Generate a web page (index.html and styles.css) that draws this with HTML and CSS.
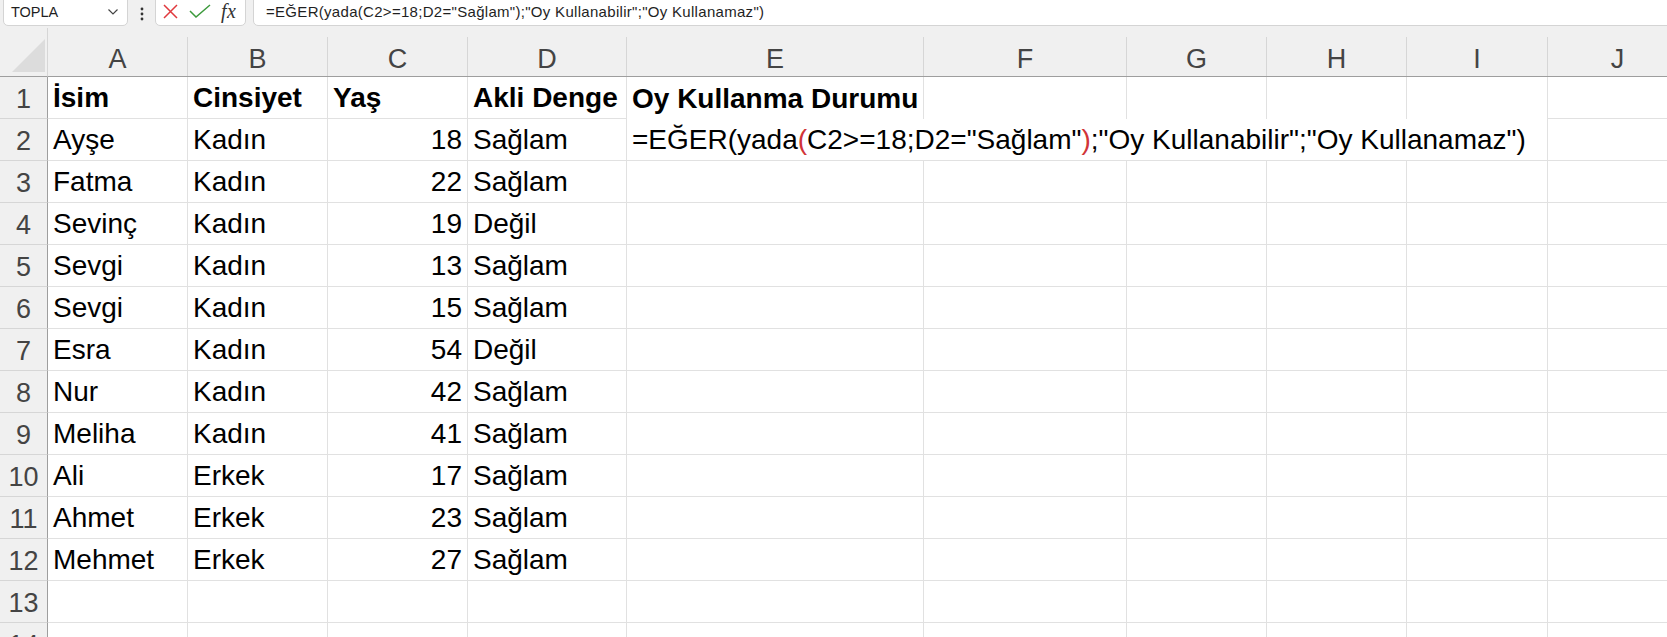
FILE: index.html
```html
<!DOCTYPE html>
<html lang="tr">
<head>
<meta charset="utf-8">
<title>Excel</title>
<link rel="stylesheet" href="styles.css">
</head>
<body>
<div class="app">
  <div class="toolbar">
    <div class="namebox">
      <span class="nb-text">TOPLA</span>
      <svg class="chev" width="10" height="6" viewBox="0 0 10 6"><polyline points="0.5,0.5 5,5 9.5,0.5" fill="none" stroke="#444" stroke-width="1.2"/></svg>
    </div>
    <div class="more">
      <svg width="4" height="14" viewBox="0 0 4 14"><circle cx="2" cy="2" r="1.4" fill="#333"/><circle cx="2" cy="7" r="1.4" fill="#333"/><circle cx="2" cy="12" r="1.4" fill="#333"/></svg>
    </div>
    <div class="btns">
      <svg class="ico-x" width="15" height="15" viewBox="0 0 15 15"><path d="M1 1 L14 14 M14 1 L1 14" stroke="#e0393e" stroke-width="1.5" fill="none"/></svg>
      <svg class="ico-ok" width="22" height="14" viewBox="0 0 22 14"><path d="M1 7 L7 13 L21 1" stroke="#3c9a3c" stroke-width="1.5" fill="none"/></svg>
      <span class="fx">fx</span>
    </div>
    <div class="fbar">=EĞER(yada(C2&gt;=18;D2="Sağlam");"Oy Kullanabilir";"Oy Kullanamaz")</div>
  </div>

  <div class="sheet">
    <div class="corner"><svg width="34" height="34" viewBox="0 0 34 34"><polygon points="33,0 33,33 0,33" fill="#dcdcdc"/></svg></div>
    <div class="ch"><span>A</span></div>
    <div class="ch"><span>B</span></div>
    <div class="ch"><span>C</span></div>
    <div class="ch"><span>D</span></div>
    <div class="ch"><span>E</span></div>
    <div class="ch"><span>F</span></div>
    <div class="ch"><span>G</span></div>
    <div class="ch"><span>H</span></div>
    <div class="ch"><span>I</span></div>
    <div class="ch"><span>J</span></div>

    <div class="rh">1</div>
    <div class="c b">İsim</div><div class="c b">Cinsiyet</div><div class="c b">Yaş</div><div class="c b">Akli Denge</div><div class="c b open">Oy Kullanma Durumu</div><div class="c open"></div><div class="c open"></div><div class="c open"></div><div class="c open"></div><div class="c"></div>

    <div class="rh">2</div>
    <div class="c">Ayşe</div><div class="c">Kadın</div><div class="c n">18</div><div class="c">Sağlam</div>
    <div class="c edit">=EĞER(yada<span class="red">(</span>C2&gt;=18;D2="Sağlam"<span class="red">)</span>;"Oy Kullanabilir";"Oy Kullanamaz")</div>
    <div class="c"></div>

    <div class="rh">3</div>
    <div class="c">Fatma</div><div class="c">Kadın</div><div class="c n">22</div><div class="c">Sağlam</div><div class="c"></div><div class="c"></div><div class="c"></div><div class="c"></div><div class="c"></div><div class="c"></div>

    <div class="rh">4</div>
    <div class="c">Sevinç</div><div class="c">Kadın</div><div class="c n">19</div><div class="c">Değil</div><div class="c"></div><div class="c"></div><div class="c"></div><div class="c"></div><div class="c"></div><div class="c"></div>

    <div class="rh">5</div>
    <div class="c">Sevgi</div><div class="c">Kadın</div><div class="c n">13</div><div class="c">Sağlam</div><div class="c"></div><div class="c"></div><div class="c"></div><div class="c"></div><div class="c"></div><div class="c"></div>

    <div class="rh">6</div>
    <div class="c">Sevgi</div><div class="c">Kadın</div><div class="c n">15</div><div class="c">Sağlam</div><div class="c"></div><div class="c"></div><div class="c"></div><div class="c"></div><div class="c"></div><div class="c"></div>

    <div class="rh">7</div>
    <div class="c">Esra</div><div class="c">Kadın</div><div class="c n">54</div><div class="c">Değil</div><div class="c"></div><div class="c"></div><div class="c"></div><div class="c"></div><div class="c"></div><div class="c"></div>

    <div class="rh">8</div>
    <div class="c">Nur</div><div class="c">Kadın</div><div class="c n">42</div><div class="c">Sağlam</div><div class="c"></div><div class="c"></div><div class="c"></div><div class="c"></div><div class="c"></div><div class="c"></div>

    <div class="rh">9</div>
    <div class="c">Meliha</div><div class="c">Kadın</div><div class="c n">41</div><div class="c">Sağlam</div><div class="c"></div><div class="c"></div><div class="c"></div><div class="c"></div><div class="c"></div><div class="c"></div>

    <div class="rh">10</div>
    <div class="c">Ali</div><div class="c">Erkek</div><div class="c n">17</div><div class="c">Sağlam</div><div class="c"></div><div class="c"></div><div class="c"></div><div class="c"></div><div class="c"></div><div class="c"></div>

    <div class="rh">11</div>
    <div class="c">Ahmet</div><div class="c">Erkek</div><div class="c n">23</div><div class="c">Sağlam</div><div class="c"></div><div class="c"></div><div class="c"></div><div class="c"></div><div class="c"></div><div class="c"></div>

    <div class="rh">12</div>
    <div class="c">Mehmet</div><div class="c">Erkek</div><div class="c n">27</div><div class="c">Sağlam</div><div class="c"></div><div class="c"></div><div class="c"></div><div class="c"></div><div class="c"></div><div class="c"></div>

    <div class="rh">13</div>
    <div class="c"></div><div class="c"></div><div class="c"></div><div class="c"></div><div class="c"></div><div class="c"></div><div class="c"></div><div class="c"></div><div class="c"></div><div class="c"></div>

    <div class="rh">14</div>
    <div class="c"></div><div class="c"></div><div class="c"></div><div class="c"></div><div class="c"></div><div class="c"></div><div class="c"></div><div class="c"></div><div class="c"></div><div class="c"></div>
  </div>
</div>
</body>
</html>
```
FILE: styles.css
```css
* { box-sizing: border-box; }

html, body {
  margin: 0;
  padding: 0;
  background: #ffffff;
}

body {
  width: 1667px;
  height: 637px;
  overflow: hidden;
  font-family: "Liberation Sans", Arial, sans-serif;
  color: #000;
}

.app {
  width: 1667px;
  overflow: hidden;
}

/* ---------- formula toolbar ---------- */
.toolbar {
  height: 28px;
  background: #f0f0f0;
  display: flex;
  align-items: flex-end;
  padding: 0 0 2px 3px;
  overflow: hidden;
}

.namebox {
  flex: 0 0 125px;
  height: 34px;
  background: #fff;
  border: 1px solid #d4d4d4;
  border-radius: 5px;
  display: flex;
  align-items: flex-end;
  justify-content: space-between;
  padding: 0 9px 5px 7px;
}

.nb-text {
  font-size: 14.5px;
  line-height: 16px;
  color: #1f1f1f;
}

.chev {
  margin-bottom: 5px;
}

.more {
  flex: 0 0 27px;
  height: 26px;
  display: flex;
  align-items: center;
  justify-content: center;
  padding-top: 2px;
}

.btns {
  flex: 0 0 91px;
  height: 34px;
  background: #fff;
  border: 1px solid #d4d4d4;
  border-radius: 5px;
  display: flex;
  align-items: flex-end;
  padding: 0 0 4px 7px;
}

.ico-x {
  margin-bottom: 2px;
}

.ico-ok {
  margin-left: 11px;
  margin-bottom: 3px;
}

.fx {
  margin-left: 10px;
  font-family: "Liberation Serif", "Times New Roman", serif;
  font-style: italic;
  font-size: 20px;
  line-height: 20px;
  color: #333;
  letter-spacing: 0.5px;
}

.fbar {
  flex: 1 1 auto;
  margin-left: 7px;
  margin-right: -10px;
  height: 34px;
  background: #fff;
  border: 1px solid #d4d4d4;
  border-radius: 5px;
  display: flex;
  align-items: flex-end;
  padding: 0 0 5px 12px;
  font-size: 15px;
  line-height: 17px;
  letter-spacing: 0.3px;
  color: #1f1f1f;
  white-space: nowrap;
}

/* ---------- sheet grid ---------- */
.sheet {
  display: grid;
  grid-template-columns: 48px 140px 140px 140px 159px 297px 203px 140px 140px 141px 140px;
  grid-template-rows: 49px repeat(14, 42px);
  width: 1688px;
}

.corner {
  background: #f0f0f0;
  border-bottom: 1px solid #9e9e9e;
  border-right: 1px solid #d6d6d6;
  display: flex;
  align-items: flex-end;
  padding: 0 0 3px 12px;
}

.ch {
  background: #f0f0f0;
  border-bottom: 1px solid #9e9e9e;
  display: flex;
  align-items: flex-end;
}

.ch span {
  display: flex;
  align-items: center;
  justify-content: center;
  width: 100%;
  height: 39px;
  border-right: 1px solid #d6d6d6;
  font-size: 27px;
  color: #444;
  padding-top: 5px;
}

.rh {
  background: #f0f0f0;
  border-right: 1px solid #9e9e9e;
  border-bottom: 1px solid #d6d6d6;
  display: flex;
  align-items: center;
  justify-content: center;
  font-size: 27px;
  color: #444;
  padding-top: 4px;
}

.c {
  border-right: 1px solid #e1e1e1;
  border-bottom: 1px solid #e1e1e1;
  display: flex;
  align-items: flex-end;
  padding: 0 5px 4px 5px;
  font-size: 28px;
  line-height: 32px;
  white-space: nowrap;
  min-width: 0;
}

.c.b {
  font-weight: bold;
}

.c.n {
  justify-content: flex-end;
}

.c.open {
  border-bottom: none;
}

.c.edit {
  grid-column: span 5;
  background: #fff;
}

.red {
  color: #d13438;
}
```
